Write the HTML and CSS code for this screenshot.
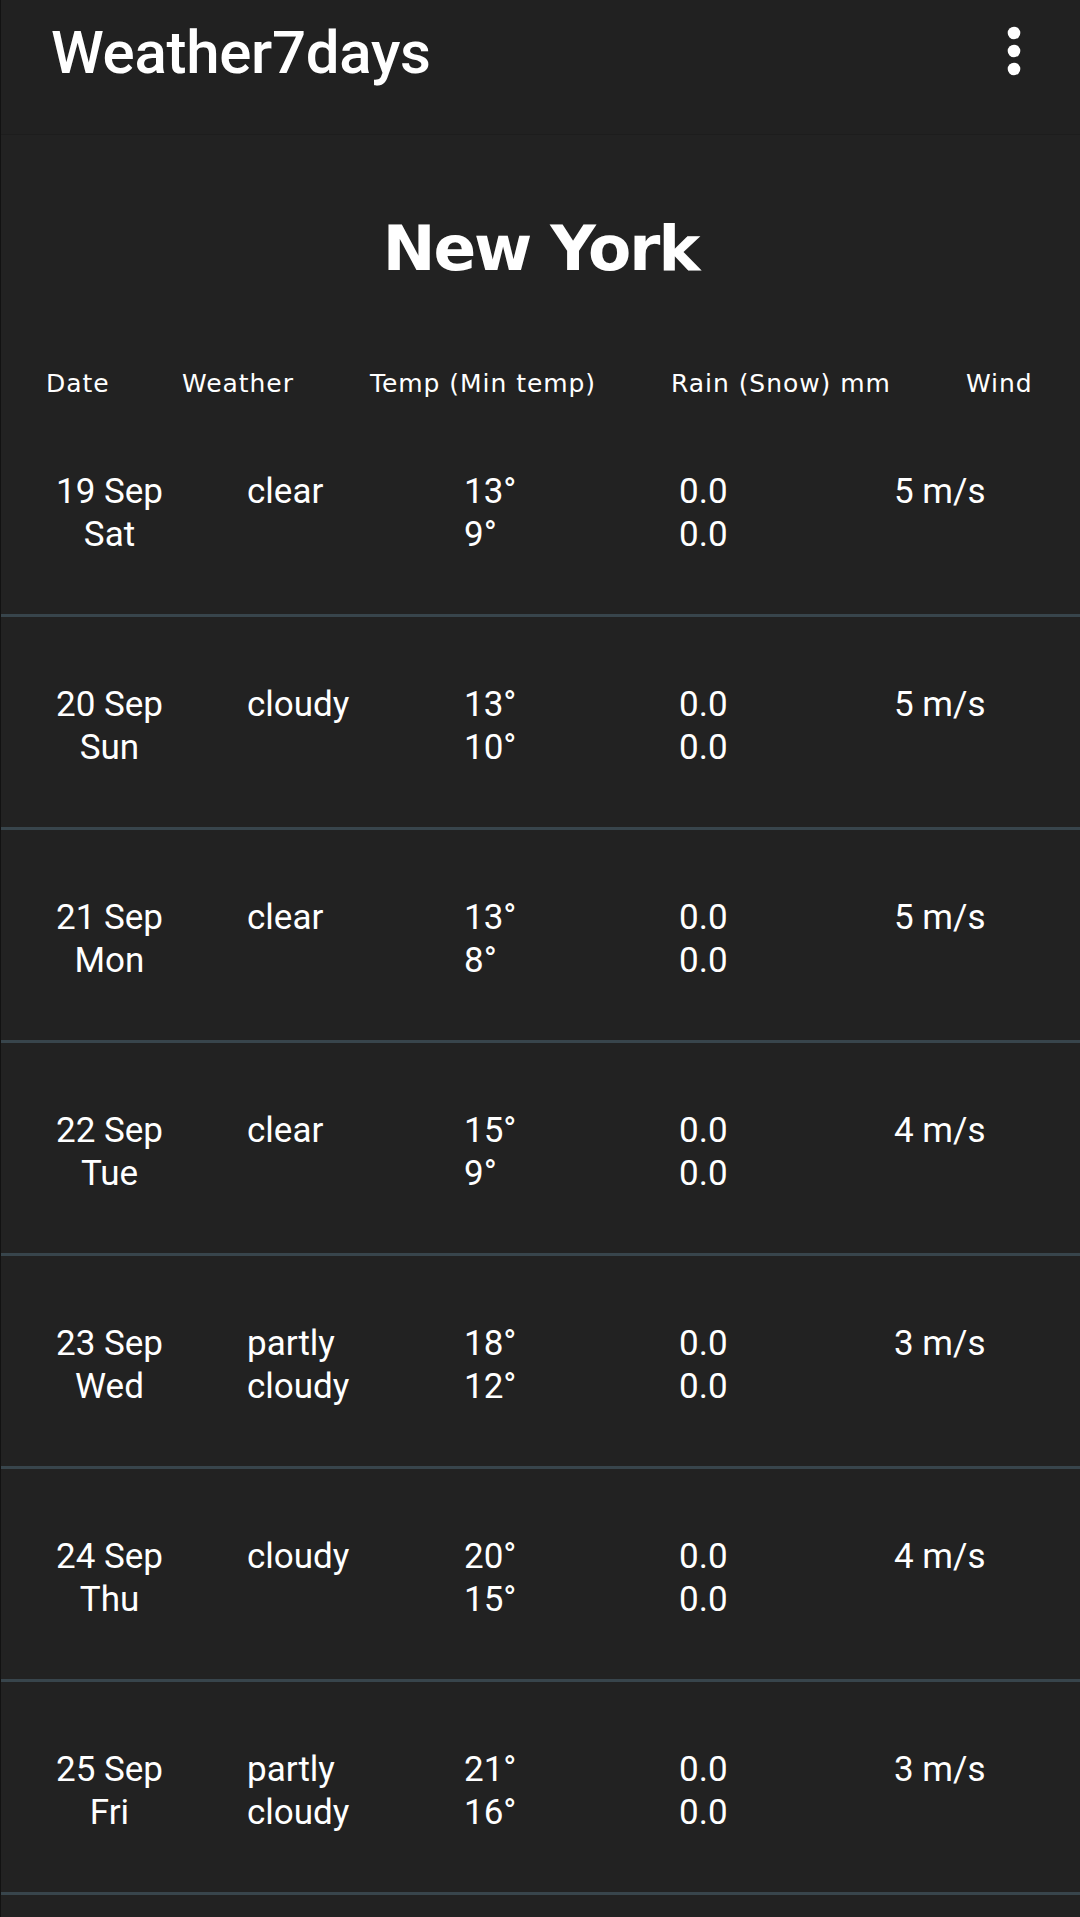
FILE: index.html
```html
<!DOCTYPE html>
<html lang="en">
<head>
<meta charset="utf-8">
<title>Weather7days</title>
<link rel="stylesheet" href="styles.css">
</head>
<body>
<div class="screen">
  <header class="appbar">
    <div class="app-title">Weather7days</div>
    <svg class="menu" width="24" height="60" viewBox="0 0 24 60" aria-label="More options">
      <circle cx="12" cy="12" r="6.3" fill="#fff"/>
      <circle cx="12" cy="30" r="6.3" fill="#fff"/>
      <circle cx="12" cy="48" r="6.3" fill="#fff"/>
    </svg>
  </header>

  <h1 class="city">New York</h1>

  <div class="cols">
    <span>Date</span>
    <span>Weather</span>
    <span>Temp (Min temp)</span>
    <span>Rain (Snow) mm</span>
    <span>Wind</span>
  </div>

  <div class="list">
    <div class="row">
      <div class="c-date">19 Sep<br>Sat</div>
      <div class="c-weather">clear</div>
      <div class="c-temp">13°<br>9°</div>
      <div class="c-rain">0.0<br>0.0</div>
      <div class="c-wind">5 m/s</div>
    </div>
    <div class="row">
      <div class="c-date">20 Sep<br>Sun</div>
      <div class="c-weather">cloudy</div>
      <div class="c-temp">13°<br>10°</div>
      <div class="c-rain">0.0<br>0.0</div>
      <div class="c-wind">5 m/s</div>
    </div>
    <div class="row">
      <div class="c-date">21 Sep<br>Mon</div>
      <div class="c-weather">clear</div>
      <div class="c-temp">13°<br>8°</div>
      <div class="c-rain">0.0<br>0.0</div>
      <div class="c-wind">5 m/s</div>
    </div>
    <div class="row">
      <div class="c-date">22 Sep<br>Tue</div>
      <div class="c-weather">clear</div>
      <div class="c-temp">15°<br>9°</div>
      <div class="c-rain">0.0<br>0.0</div>
      <div class="c-wind">4 m/s</div>
    </div>
    <div class="row">
      <div class="c-date">23 Sep<br>Wed</div>
      <div class="c-weather">partly<br>cloudy</div>
      <div class="c-temp">18°<br>12°</div>
      <div class="c-rain">0.0<br>0.0</div>
      <div class="c-wind">3 m/s</div>
    </div>
    <div class="row">
      <div class="c-date">24 Sep<br>Thu</div>
      <div class="c-weather">cloudy</div>
      <div class="c-temp">20°<br>15°</div>
      <div class="c-rain">0.0<br>0.0</div>
      <div class="c-wind">4 m/s</div>
    </div>
    <div class="row">
      <div class="c-date">25 Sep<br>Fri</div>
      <div class="c-weather">partly<br>cloudy</div>
      <div class="c-temp">21°<br>16°</div>
      <div class="c-rain">0.0<br>0.0</div>
      <div class="c-wind">3 m/s</div>
    </div>
  </div>
</div>
</body>
</html>
```

FILE: styles.css
```css
html, body {
  margin: 0;
  padding: 0;
  background: #222222;
}

.screen {
  width: 1080px;
  min-height: 1917px;
  box-sizing: border-box;
  border-left: 1px solid #121212;
  background: #222222;
  color: #ffffff;
  overflow: hidden;
}

.appbar {
  height: 135px;
  box-sizing: border-box;
  background: #212121;
  border-bottom: 1px solid #1d1d1d;
  display: flex;
  justify-content: space-between;
  align-items: flex-start;
  padding: 23px 54px 0 50px;
}

.app-title {
  font-family: Roboto, "Liberation Sans", sans-serif;
  font-weight: 500;
  font-size: 60px;
  line-height: 60px;
  letter-spacing: -0.3px;
}

.menu {
  margin-top: -2px;
  display: block;
}

.city {
  margin: 82px 0 0 0;
  text-align: center;
  font-family: "DejaVu Sans", sans-serif;
  font-weight: 700;
  font-size: 63px;
  line-height: 63px;
  letter-spacing: -2px;
}

.cols {
  margin-top: 91px;
  display: grid;
  grid-template-columns: 136px 188px 301px 295px auto;
  padding-left: 45px;
  font-family: "DejaVu Sans", sans-serif;
  font-size: 25px;
  line-height: 25px;
  letter-spacing: 0.95px;
  white-space: nowrap;
}

.list {
  margin-top: 8px;
}

.row {
  display: grid;
  grid-template-columns: 217px 246px 215px 215px 1fr;
  align-items: start;
  padding: 66px 0 58px 0;
  height: 86px;
  border-bottom: 3px solid #38454c;
  font-family: Roboto, "Liberation Sans", sans-serif;
  font-size: 35px;
  line-height: 43px;
}

.c-date {
  text-align: center;
}

.c-weather {
  padding-left: 29px;
}
```
